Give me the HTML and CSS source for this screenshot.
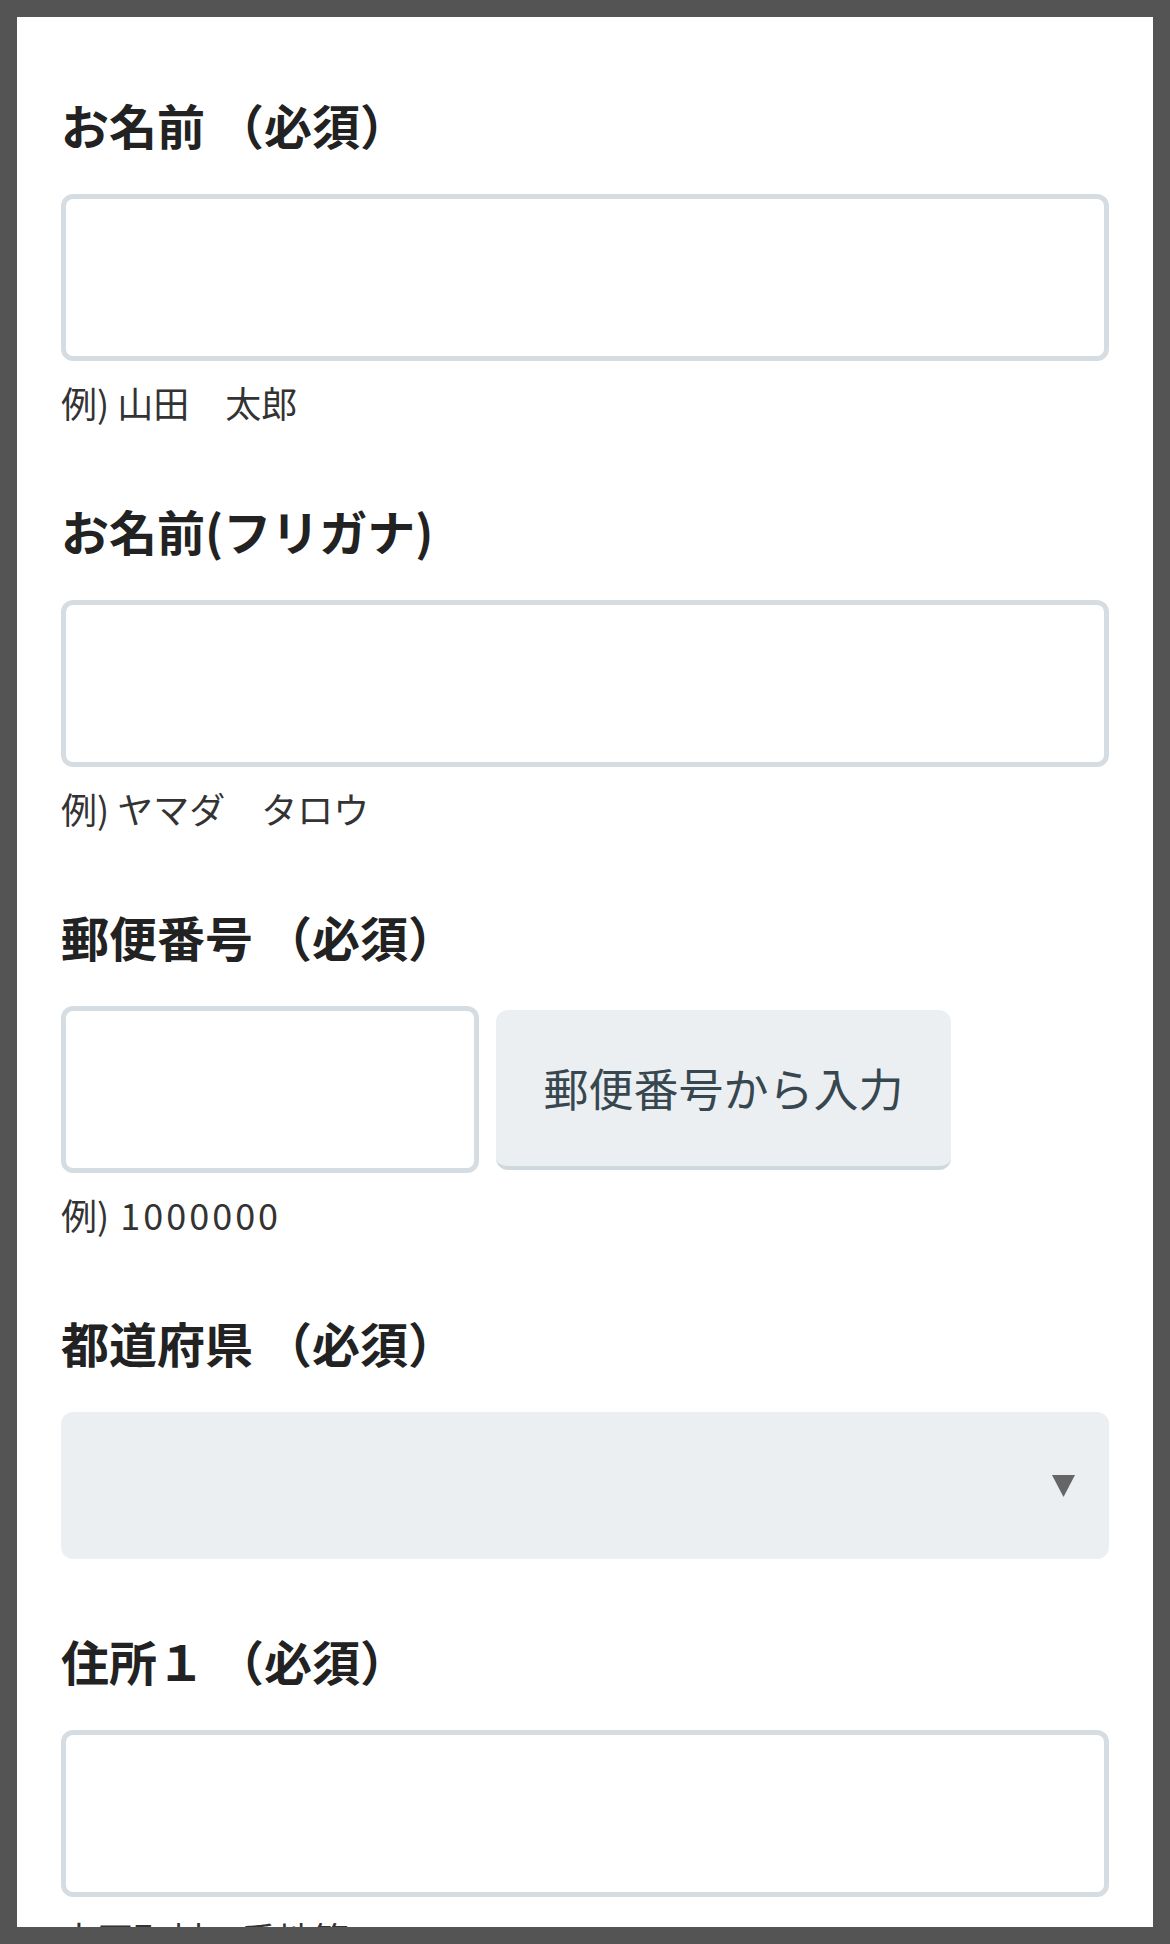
FILE: index.html
```html
<!DOCTYPE html>
<html lang="ja">
<head>
    <meta charset="UTF-8">
    <meta name="viewport" content="width=device-width, initial-scale=1.0">
    <title>お届け先の入力</title>
    <link rel="stylesheet" href="styles.css">
</head>
<body>
    <div class="screen">
        <form class="entry-form">
            <div class="field">
                <label class="field-label" for="name">お名前 （必須）</label>
                <input class="text-input" id="name" type="text">
                <p class="field-hint">例) 山田　太郎</p>
            </div>

            <div class="field">
                <label class="field-label" for="kana">お名前(フリガナ)</label>
                <input class="text-input" id="kana" type="text">
                <p class="field-hint">例) ヤマダ　タロウ</p>
            </div>

            <div class="field">
                <label class="field-label" for="zip">郵便番号 （必須）</label>
                <div class="zip-row">
                    <input class="text-input zip-input" id="zip" type="text">
                    <button type="button" class="zip-button">郵便番号から入力</button>
                </div>
                <p class="field-hint">例) <span class="hint-number">1000000</span></p>
            </div>

            <div class="field">
                <label class="field-label" for="pref">都道府県 （必須）</label>
                <div class="select-wrap">
                    <select class="select-input" id="pref">
                        <option></option>
                    </select>
                    <svg class="select-arrow" viewBox="0 0 23 22" aria-hidden="true">
                        <polygon points="0,0 23,0 11.5,22"></polygon>
                    </svg>
                </div>
            </div>

            <div class="field">
                <label class="field-label" for="addr1">住所１ （必須）</label>
                <input class="text-input" id="addr1" type="text">
                <p class="field-hint">市区町村　番地等</p>
            </div>
        </form>
    </div>
</body>
</html>
```

FILE: styles.css
```css
* {
    box-sizing: border-box;
}

html,
body {
    height: 100%;
    margin: 0;
}

body {
    background: #545454;
    padding: 17px;
    font-family: "Noto Sans CJK JP", "Noto Sans", sans-serif;
    color: #222;
}

.screen {
    height: 100%;
    background: #fff;
    padding: 71px 44px 0;
    overflow: hidden;
}

.field {
    margin-bottom: 65px;
}

.field-label {
    display: block;
    font-size: 48px;
    line-height: 72px;
    font-weight: 700;
    margin-bottom: 34px;
}

.text-input {
    display: block;
    width: 100%;
    height: 167px;
    padding: 0 20px;
    border: 5px solid #d5dde2;
    border-radius: 12px;
    background: #fff;
    font: inherit;
    font-size: 40px;
    appearance: none;
    outline: none;
}

.field-hint {
    margin: 14px 0 0;
    font-size: 36px;
    line-height: 54px;
    color: #333;
}

.hint-number {
    margin-left: 3px;
    letter-spacing: 3px;
}

.zip-row {
    display: flex;
    align-items: center;
    gap: 17px;
}

.zip-input {
    width: 418px;
}

.zip-button {
    width: 455px;
    height: 160px;
    border: none;
    border-bottom: 4px solid #cfd8dc;
    border-radius: 12px;
    background: #eceff1;
    font: inherit;
    font-size: 45px;
    color: #37474f;
    cursor: pointer;
}

.select-wrap {
    position: relative;
}

.select-input {
    display: block;
    width: 100%;
    height: 147px;
    border: none;
    border-radius: 12px;
    background: #eceff1;
    appearance: none;
    outline: none;
}

.select-arrow {
    position: absolute;
    right: 34px;
    top: 63px;
    width: 23px;
    height: 22px;
    fill: #666;
    pointer-events: none;
}
```
